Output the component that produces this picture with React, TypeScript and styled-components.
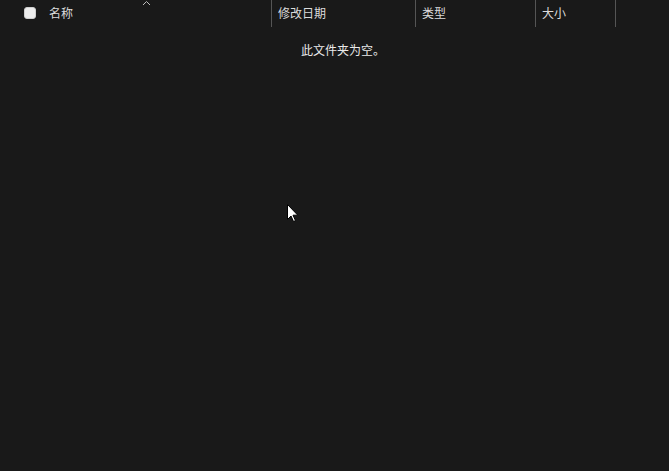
import React from "react";
import styled, { createGlobalStyle } from "styled-components";

const Global = createGlobalStyle`
  html, body { margin: 0; padding: 0; background: #191919; }
  body { font-family: "Noto Sans CJK SC", "Noto Sans", sans-serif; }
  #root { min-height: 471px; }
`;

const Page = styled.div`
  position: relative;
  width: 669px;
  height: 471px;
  background: #191919;
  overflow: hidden;
`;

const Header = styled.div`
  display: flex;
  height: 27px;
  align-items: stretch;
`;

const Cell = styled.div<{ $w: number; $pad?: number }>`
  position: relative;
  width: ${(p) => p.$w}px;
  flex: none;
  box-sizing: border-box;
  padding-left: ${(p) => p.$pad ?? 6}px;
  display: flex;
  align-items: center;
  gap: 13px;
  border-right: 1px solid #555555;
  color: #dcdcdc;
  font-size: 12px;
  line-height: 1;
  padding-bottom: 1px;
`;

const Check = styled.span`
  width: 12px;
  height: 12px;
  border-radius: 3px;
  background: #ededed;
  box-sizing: border-box;
  border: 1px solid #cfcfcf;
`;

const Caret = styled.svg`
  position: absolute;
  left: 142px;
  top: 0px;
`;

const Empty = styled.div`
  text-align: center;
  color: #eaeaea;
  font-size: 12px;
  line-height: 16px;
  margin-top: 15px;
  padding-left: 17px;
`;

const Cursor = styled.svg`
  position: absolute;
  left: 287px;
  top: 204px;
`;

export default function App() {
  return (
    <Page>
      <Global />
      <Header>
        <Cell $w={272} $pad={24}>
          <Check />
          <span>名称</span>
          <Caret width="9" height="6" viewBox="0 0 9 6">
            <path d="M1 5 L4.5 1.5 L8 5" stroke="#bdbdbd" strokeWidth="1" fill="none" />
          </Caret>
        </Cell>
        <Cell $w={144}>修改日期</Cell>
        <Cell $w={120}>类型</Cell>
        <Cell $w={80}>大小</Cell>
      </Header>
      <Empty>此文件夹为空。</Empty>
      <Cursor width="12" height="19" viewBox="0 0 12 19">
        <path
          d="M0.5 0.5 L0.5 15.5 L4 12 L6.5 17.5 L8.5 16.6 L6 11.2 L10.8 11.2 Z"
          fill="#ffffff"
          stroke="#000000"
          strokeWidth="1"
          strokeLinejoin="round"
        />
      </Cursor>
    </Page>
  );
}
